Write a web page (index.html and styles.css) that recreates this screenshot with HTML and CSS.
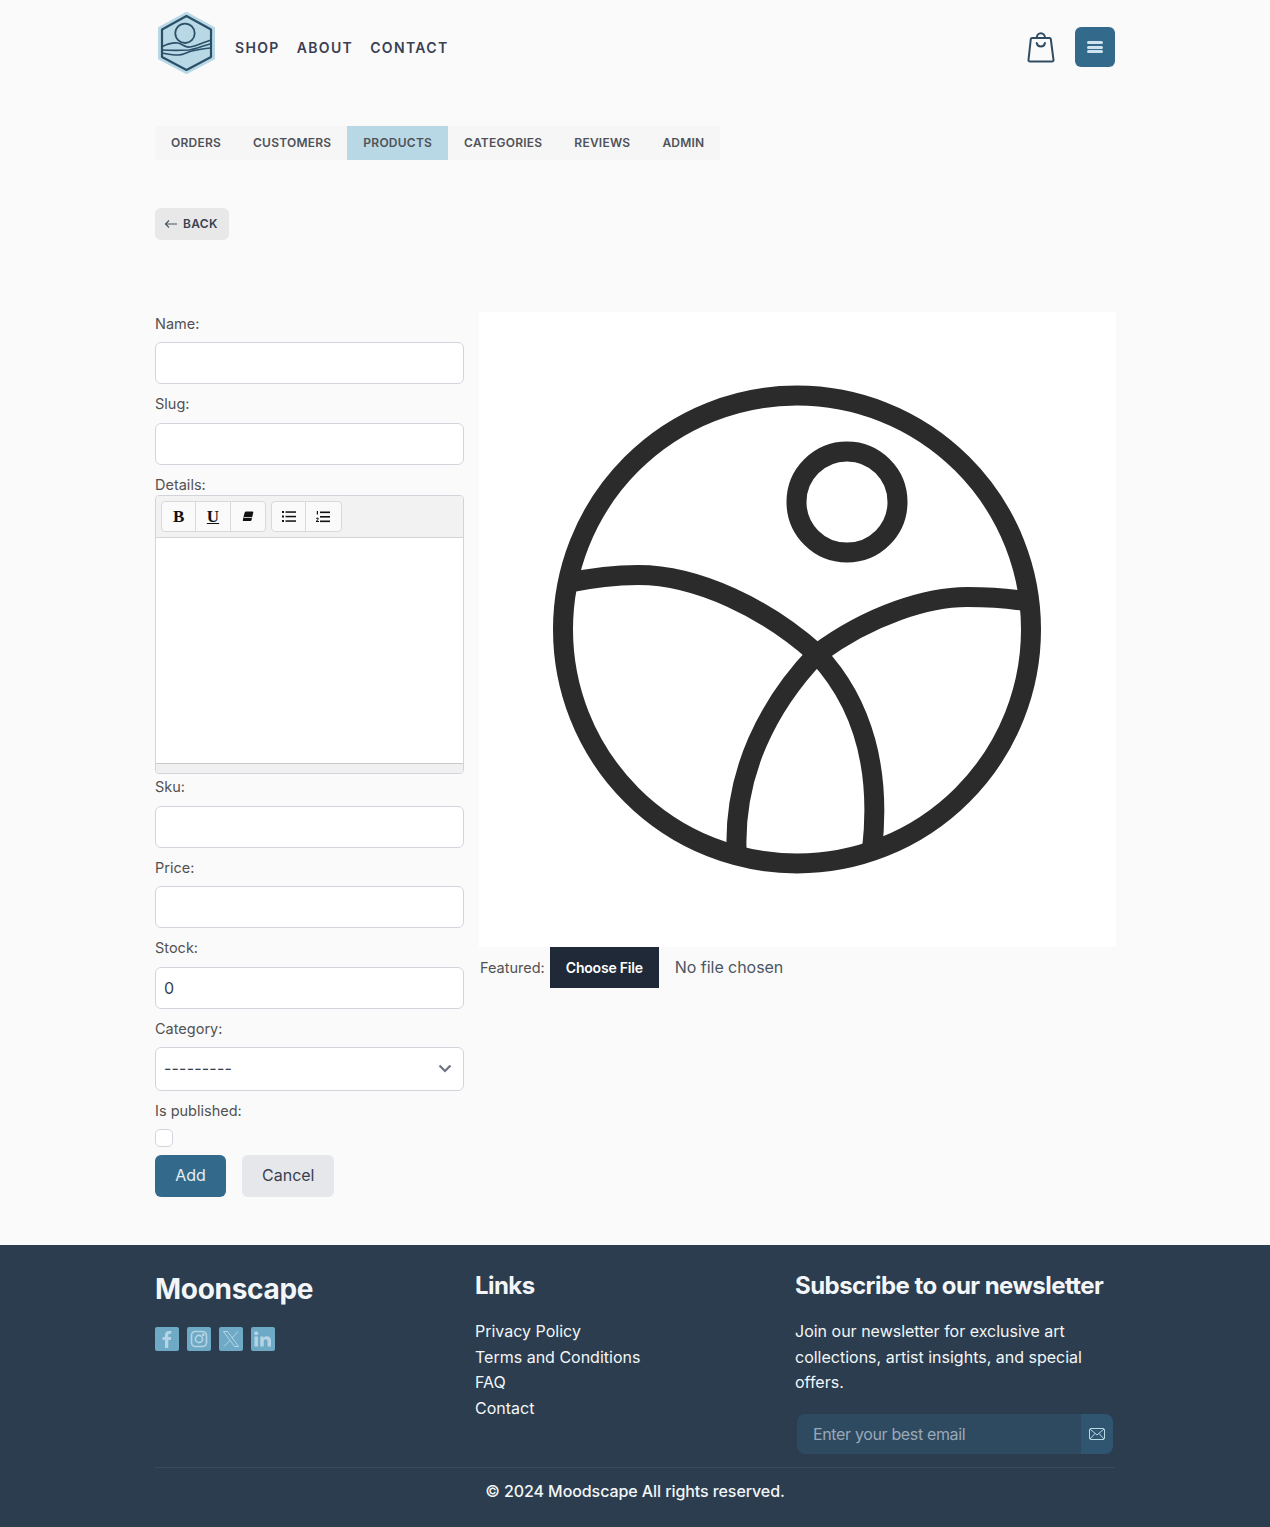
FILE: index.html
```html
<!DOCTYPE html>
<html lang="en">
<head>
  <meta charset="UTF-8" />
  <meta name="viewport" content="width=device-width, initial-scale=1.0" />
  <title>Moodscape - Add product</title>
  <link rel="stylesheet" href="styles.css">
</head>
<body>

  <header class="site-header wrap">
    <a class="logo" href="#">
      <svg width="60" height="62" viewBox="0 0 60 62" fill="none">
        <path d="M30.5 1 L58 16 L58 46.5 L30.5 61 L3 46.5 L3 16 Z" fill="#b9d8e5" stroke="#b9d8e5" stroke-width="2" stroke-linejoin="round"/>
        <path d="M30.5 4 L55 17.5 L55 45 L30.5 58 L6 45 L6 17.5 Z" stroke="#2a5068" stroke-width="2.2" stroke-linejoin="round"/>
        <circle cx="29" cy="21.3" r="9.7" stroke="#2a5068" stroke-width="1.8"/>
        <path d="M6 34.7 C12 31.5 18 30.5 22 31 C27 32 29 36 34 35 C41 34 48 30 55 28" stroke="#2a5068" stroke-width="1.6"/>
        <path d="M6 38 C14 38.5 25 38.5 33 38 C41 37 48 33 55 32" stroke="#2a5068" stroke-width="1.6"/>
        <path d="M6 41 C12 42 17 43 22 43 C27 43 29 41 34 39.5 C41 38 48 36 55 36" stroke="#2a5068" stroke-width="1.6"/>
      </svg>
    </a>
    <nav class="main-nav">
      <a href="#">Shop</a>
      <a href="#">About</a>
      <a href="#">Contact</a>
    </nav>
    <div class="header-actions">
      <a class="cart" href="#">
        <svg width="30" height="32" viewBox="0 0 30 32" fill="none" stroke="#2f4c63" stroke-width="2" stroke-linecap="round" stroke-linejoin="round">
          <path d="M6 7 L23.5 7 Q24.6 7 24.8 8 L27.5 29 C27.6 30 27 30.5 26 30.5 L4 30.5 C3 30.5 2.4 30 2.5 29 L4.8 8 Q5 7 6 7 Z"/>
          <path d="M10.7 7 C10.7 .5 19 .5 19 7"/>
          <path d="M10.7 12 C11.5 16.5 18.2 16.5 19 12"/>
        </svg>
      </a>
      <button class="menu-btn" type="button" aria-label="Menu">
        <span></span><span></span><span></span>
      </button>
    </div>
  </header>

  <main class="wrap">
    <ul class="admin-tabs">
      <li><a href="#">Orders</a></li>
      <li><a href="#">Customers</a></li>
      <li><a class="active" href="#">Products</a></li>
      <li><a href="#">Categories</a></li>
      <li><a href="#">Reviews</a></li>
      <li><a href="#">Admin</a></li>
    </ul>

    <a class="back-btn" href="#">
      <svg width="14" height="10" viewBox="0 0 14 10" fill="none" stroke="#4b5563" stroke-width="1.2">
        <path d="M13 5 H1.5 M5 1.5 L1.5 5 L5 8.5"/>
      </svg>
      Back
    </a>

    <form class="product-form">
      <div class="form-fields">
        <label class="field-label">Name:</label>
        <input class="text-input" type="text">

        <label class="field-label">Slug:</label>
        <input class="text-input" type="text">

        <label class="field-label tight">Details:</label>
        <div class="editor">
          <div class="editor-toolbar">
            <div class="tool-group">
              <button class="tool serif" type="button"><b>B</b></button>
              <button class="tool serif" type="button"><b class="under">U</b></button>
              <button class="tool" type="button">
                <svg width="12" height="11" viewBox="0 0 12 11"><path d="M4 .5 H10.5 Q11.5 .5 11.3 1.5 L9.5 9 Q9.3 10 8.5 10 H2 C1 10 .7 9.6 .8 9 L2.5 2 Q2.8 .5 4 .5 Z" fill="#111"/><path d="M1.8 6.5 H10" stroke="#f5f5f5" stroke-width=".8"/></svg>
              </button>
            </div>
            <div class="tool-group">
              <button class="tool" type="button">
                <svg width="14" height="11" viewBox="0 0 14 11" fill="#111"><rect x="0" y="0" width="2" height="2"/><rect x="0" y="4.5" width="2" height="2"/><rect x="0" y="9" width="2" height="2"/><rect x="3.5" y=".3" width="10.5" height="1.5"/><rect x="3.5" y="4.8" width="10.5" height="1.5"/><rect x="3.5" y="9.3" width="10.5" height="1.5"/></svg>
              </button>
              <button class="tool" type="button">
                <svg width="14" height="12" viewBox="0 0 14 12" fill="#111"><path d="M.8 0 H2 V3.5 H.8 Z" /><path d="M0 8 Q0 6.5 1.5 6.5 Q3 6.5 2.7 8 L1.3 10 H3 V11 H0 V10 L1.7 8.2 Q1.7 7.5 1.4 7.5 Q1 7.5 1 8 Z"/><rect x="4" y=".5" width="10" height="1.6"/><rect x="4" y="5" width="10" height="1.6"/><rect x="4" y="9.5" width="10" height="1.6"/></svg>
              </button>
            </div>
          </div>
          <div class="editor-body"></div>
          <div class="editor-status"></div>
        </div>

        <label class="field-label after-editor">Sku:</label>
        <input class="text-input" type="text">

        <label class="field-label">Price:</label>
        <input class="text-input" type="text">

        <label class="field-label">Stock:</label>
        <input class="text-input" type="number" value="0">

        <label class="field-label short">Category:</label>
        <select class="select-input">
          <option>---------</option>
        </select>

        <label class="field-label">Is published:</label>
        <input class="check-input" type="checkbox">

        <div class="form-actions">
          <button class="btn btn-primary" type="submit">Add</button>
          <button class="btn btn-muted" type="button">Cancel</button>
        </div>
      </div>

      <div class="form-image">
        <div class="image-preview">
          <svg width="637" height="635" viewBox="0 0 637 635" fill="none" stroke="#2b2b2b" stroke-width="20">
            <circle cx="318" cy="317.5" r="234"/>
            <circle cx="368" cy="190" r="50.5"/>
            <path d="M88 271 C112 266 135 263 159 263 C219 263 288 297 338 342 C385 392 402 460 393 538"/>
            <path d="M551 290 C530 286 510 285 488 285 C450 285 392 302 338 342 C292 390 252 460 258 548"/>
          </svg>
        </div>
        <div class="file-row">
          <label class="file-label">Featured:</label>
          <input class="file-input" type="file">
        </div>
      </div>
    </form>
  </main>

  <footer class="site-footer">
    <div class="wrap">
      <div class="footer-cols">
        <div>
          <h2 class="footer-brand">Moonscape</h2>
          <div class="socials">
            <a href="#"><svg width="16" height="18" viewBox="0 0 16 18" fill="#b5d5e5"><path d="M6 18 V10 H3.5 V7 H6 V5 C6 2.3 7.5 1 10 1 C11 1 12 1.1 12.3 1.2 V3.8 H10.8 C9.5 3.8 9.3 4.4 9.3 5.3 V7 H12.2 L11.8 10 H9.3 V18 Z"/></svg></a>
            <a href="#"><svg width="18" height="18" viewBox="0 0 18 18" fill="none" stroke="#b5d5e5" stroke-width="1.6"><rect x="1.5" y="1.5" width="15" height="15" rx="4"/><circle cx="9" cy="9" r="3.6"/><circle cx="13.3" cy="4.7" r=".6" fill="#b5d5e5"/></svg></a>
            <a href="#"><svg width="18" height="18" viewBox="0 0 18 18" fill="none" stroke="#b5d5e5" stroke-width="1"><path d="M1.5 1.5 H5.5 L16.5 16.5 H12.5 Z"/><path d="M16 1.5 L10 8 M8 10.3 L2 16.5"/></svg></a>
            <a href="#"><svg width="18" height="16" viewBox="0 0 18 16" fill="#b5d5e5"><circle cx="2.2" cy="2.2" r="2"/><rect x=".5" y="5.5" width="3.4" height="10"/><path d="M6.3 5.5 H9.5 V7 C10.2 5.9 11.3 5.3 12.8 5.3 C15.8 5.3 17 7 17 10 V15.5 H13.6 V10.6 C13.6 9 13 8.2 11.8 8.2 C10.5 8.2 9.7 9 9.7 10.6 V15.5 H6.3 Z"/></svg></a>
          </div>
        </div>
        <div>
          <h3 class="footer-title">Links</h3>
          <ul class="footer-links">
            <li><a href="#">Privacy Policy</a></li>
            <li><a href="#">Terms and Conditions</a></li>
            <li><a href="#">FAQ</a></li>
            <li><a href="#">Contact</a></li>
          </ul>
        </div>
        <div>
          <h3 class="footer-title">Subscribe to our newsletter</h3>
          <p class="footer-text">Join our newsletter for exclusive art collections, artist insights, and special offers.</p>
          <div class="newsletter">
            <input class="newsletter-input" type="email" placeholder="Enter your best email">
            <button class="newsletter-btn" type="button" aria-label="Subscribe">
              <svg width="16" height="12" viewBox="0 0 16 12" fill="none" stroke="#b9d8e5" stroke-width="1"><rect x=".5" y=".5" width="15" height="11" rx="1.5"/><path d="M1 1 L8 7 L15 1 M1 11 L6 5.5 M15 11 L10 5.5"/></svg>
            </button>
          </div>
        </div>
      </div>
      <p class="copyright">© 2024 Moodscape All rights reserved.</p>
    </div>
  </footer>

</body>
</html>
```

FILE: styles.css
```css
* {
  box-sizing: border-box;
  margin: 0;
  padding: 0;
}

body {
  font-family: Inter, 'Noto Sans', sans-serif;
  font-size: 16px;
  background-color: #fafafa;
  color: #4b5563;
}

a {
  text-decoration: none;
  color: inherit;
}

ul {
  list-style: none;
}

.wrap {
  width: 960px;
  margin: 0 auto;
}

/* Header */
.site-header {
  display: flex;
  align-items: center;
  height: 94px;
}

.logo {
  display: flex;
  margin-top: -8px;
  margin-left: 1px;
}

.main-nav {
  display: flex;
  gap: 17px;
  margin-left: 19px;
}

.main-nav a {
  font-size: 14px;
  font-weight: 600;
  letter-spacing: 1.35px;
  text-transform: uppercase;
  color: #3a4054;
}

.header-actions {
  display: flex;
  align-items: center;
  gap: 19px;
  margin-left: auto;
}

.cart {
  display: flex;
}

.menu-btn {
  display: flex;
  flex-direction: column;
  align-items: center;
  justify-content: center;
  gap: 1.5px;
  width: 40px;
  height: 40px;
  background-color: #336a8c;
  border: none;
  border-radius: 6px;
}

.menu-btn span {
  width: 16px;
  height: 3px;
  background-color: #cfe3ee;
  border-radius: 2px;
}

/* Admin tabs */
.admin-tabs {
  display: inline-flex;
  margin-top: 32px;
  background-color: #f6f6f7;
  border-radius: 4px;
  vertical-align: top;
}

.admin-tabs a {
  display: block;
  padding: 0 16px;
  line-height: 34px;
  font-size: 12px;
  font-weight: 600;
  letter-spacing: .235px;
  text-transform: uppercase;
  color: #4f5257;
}

.admin-tabs a.active {
  background-color: #b9d8e5;
}

.back-btn {
  display: flex;
  align-items: center;
  gap: 5px;
  width: 74px;
  height: 32px;
  margin-top: 48px;
  padding: 0 0 1px 9px;
  background-color: #e8e8e9;
  border-radius: 6px;
  font-size: 12px;
  font-weight: 600;
  letter-spacing: .3px;
  text-transform: uppercase;
  color: #374151;
}

/* Form */
.product-form {
  display: flex;
  gap: 15px;
  margin-top: 63.75px;
}

.form-fields {
  width: 309px;
  flex-shrink: 0;
}

.field-label {
  display: block;
  margin: 8.8px 0 7.2px;
  font-size: 14.5px;
  line-height: 22.5px;
  color: #525252;
}

.field-label.tight {
  margin-bottom: -.8px;
}

.field-label.after-editor {
  margin: 1.7px 0 7.5px;
}

.field-label.short {
  margin-bottom: 6.7px;
}

.text-input,
.select-input {
  display: block;
  width: 100%;
  height: 42px;
  padding: 0 8px;
  background-color: #fff;
  border: 1px solid #d1d5db;
  border-radius: 6px;
  font-family: inherit;
  font-size: 16px;
  color: #374151;
}

.select-input {
  height: 44px;
  padding-bottom: 2px;
  appearance: none;
  letter-spacing: .2px;
  background-image: url("data:image/svg+xml,%3Csvg xmlns='http://www.w3.org/2000/svg' width='14' height='9' fill='none' stroke='%236b7280' stroke-width='2.2'%3E%3Cpath d='M1.5 1.5 L7 7 L12.5 1.5'/%3E%3C/svg%3E");
  background-repeat: no-repeat;
  background-position: right 11px center;
}

.check-input {
  display: block;
  width: 18px;
  height: 18px;
  appearance: none;
  background-color: #fff;
  border: 1px solid #d1d5db;
  border-radius: 5px;
}

.form-actions {
  display: flex;
  gap: 16px;
  margin-top: 8px;
}

.btn {
  height: 42px;
  padding: 0 20px 2px;
  border: none;
  border-radius: 6px;
  font-family: inherit;
  font-size: 16px;
}

.btn-primary {
  background-color: #336a8c;
  color: #e3eff5;
  width: 71px;
}

.btn-muted {
  background-color: #e5e7eb;
  color: #374151;
  width: 92px;
}

/* Rich text editor */
.editor {
  height: 279px;
  display: flex;
  flex-direction: column;
  border: 1px solid #d1d5db;
  border-radius: 4px;
  overflow: hidden;
}

.editor-toolbar {
  display: flex;
  gap: 5px;
  height: 42px;
  padding: 5px;
  background-color: #f2f2f2;
  border-bottom: 1px solid #d4d4d4;
}

.tool-group {
  display: flex;
  height: 31px;
  background-color: #fafafa;
  border: 1px solid #d9d9d9;
  border-radius: 4px;
}

.tool {
  display: flex;
  align-items: center;
  justify-content: center;
  width: 34.33px;
  background: none;
  border: none;
  border-right: 1px solid #d9d9d9;
  color: #111;
}

.tool:last-child {
  border-right: none;
}

.tool.serif {
  font-family: 'Liberation Serif', serif;
  font-size: 17px;
}

.under {
  text-decoration: underline;
}

.editor-body {
  flex: 1;
  background-color: #fff;
}

.editor-status {
  height: 10px;
  background-color: #f0f0f0;
  border-top: 1px solid #c9c9c9;
}

/* Image side */
.form-image {
  flex: 1;
  padding-top: 8.25px;
}

.image-preview {
  display: flex;
  height: 635px;
  background-color: #fff;
  margin-right: -1px;
}

.file-row {
  display: flex;
  align-items: center;
  gap: 5px;
  padding-left: 1px;
}

.file-label {
  font-size: 14.5px;
  color: #525252;
}

.file-input {
  font-family: inherit;
  font-size: 16px;
  color: #4b5563;
  letter-spacing: -.05px;
}

.file-input::file-selector-button {
  height: 41px;
  margin-right: 16px;
  padding: 0 16px;
  background-color: #1f2937;
  border: none;
  font-family: inherit;
  font-size: 14px;
  font-weight: 600;
  letter-spacing: -.2px;
  color: #fff;
}

/* Footer */
.site-footer {
  margin-top: 47.7px;
  height: 281.8px;
  background-color: #2b3d4f;
  color: #f3f6f8;
}

.footer-cols {
  display: grid;
  grid-template-columns: repeat(3, 1fr);
  height: 223px;
  padding-top: 24px;
  border-bottom: 1px solid #364a5c;
}

.footer-brand {
  font-size: 28px;
  font-weight: 700;
  line-height: 40px;
  letter-spacing: -.3px;
}

.socials {
  display: flex;
  gap: 8px;
  margin-top: 18px;
}

.socials a {
  display: flex;
  align-items: center;
  justify-content: center;
  width: 24px;
  height: 24px;
  background-color: #6ea9c6;
  border-radius: 2px;
}

.footer-title {
  font-size: 24px;
  font-weight: 700;
  line-height: 34px;
  letter-spacing: -.55px;
}

.footer-links {
  margin-top: 16px;
  line-height: 25.6px;
}

.footer-text {
  margin-top: 16px;
  width: 300px;
  line-height: 25.6px;
}

.newsletter {
  display: flex;
  width: 316px;
  height: 40px;
  margin: 18px 0 0 2px;
}

.newsletter-input {
  flex: 1;
  min-width: 0;
  padding: 0 16px;
  background-color: #2e4a60;
  border: none;
  border-radius: 8px 0 0 8px;
  font-family: inherit;
  font-size: 16px;
  color: #fff;
}

.newsletter-input::placeholder {
  color: #9aa8b8;
  letter-spacing: -.35px;
}

.newsletter-btn {
  display: flex;
  align-items: center;
  justify-content: center;
  width: 32px;
  background-color: #305570;
  border: none;
  border-radius: 0 8px 8px 0;
}

.copyright {
  margin-top: 11px;
  text-align: center;
  font-weight: 500;
  line-height: 24px;
  letter-spacing: -.08px;
}
```
